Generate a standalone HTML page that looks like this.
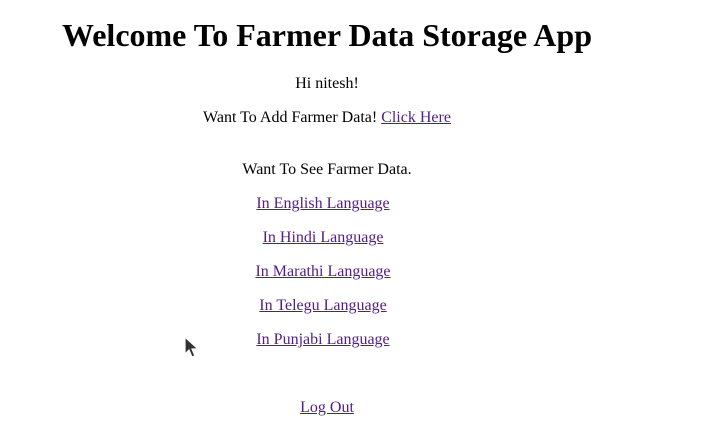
<!DOCTYPE html>
<html><head><style>
body{margin:0;width:709px;height:446px;background:#fff;font-family:"Liberation Serif",serif;font-size:16px;color:#000;position:relative;overflow:hidden}
.l{position:absolute;left:0;width:654px;text-align:center;line-height:20px;white-space:nowrap}
.s{width:646px}
h1{position:absolute;left:0;width:654px;text-align:center;margin:0;font-size:32px;line-height:40px;top:15px;font-weight:bold}
a{color:#551a8b;text-decoration:underline}
</style></head><body>
<h1>Welcome To Farmer Data Storage App</h1>
<div class="l" style="top:74px">Hi nitesh!</div>
<div class="l" style="top:108px">Want To Add Farmer Data! <a>Click Here</a></div>
<div class="l" style="top:160px">Want To See Farmer Data.</div>
<div class="l s" style="top:194px"><a>In English Language</a></div>
<div class="l s" style="top:228px"><a>In Hindi Language</a></div>
<div class="l s" style="top:262px"><a>In Marathi Language</a></div>
<div class="l s" style="top:296px"><a>In Telegu Language</a></div>
<div class="l s" style="top:330px"><a>In Punjabi Language</a></div>
<div class="l" style="top:398px"><a>Log Out</a></div>
<svg style="position:absolute;left:183px;top:336px" width="18" height="24" viewBox="0 0 18 24"><path d="M2 1 L2 18 L6 14 L9 21 L12 20 L9 13 L15 13 Z" fill="#333" stroke="#fff" stroke-width="1.2"/></svg>
</body></html>
